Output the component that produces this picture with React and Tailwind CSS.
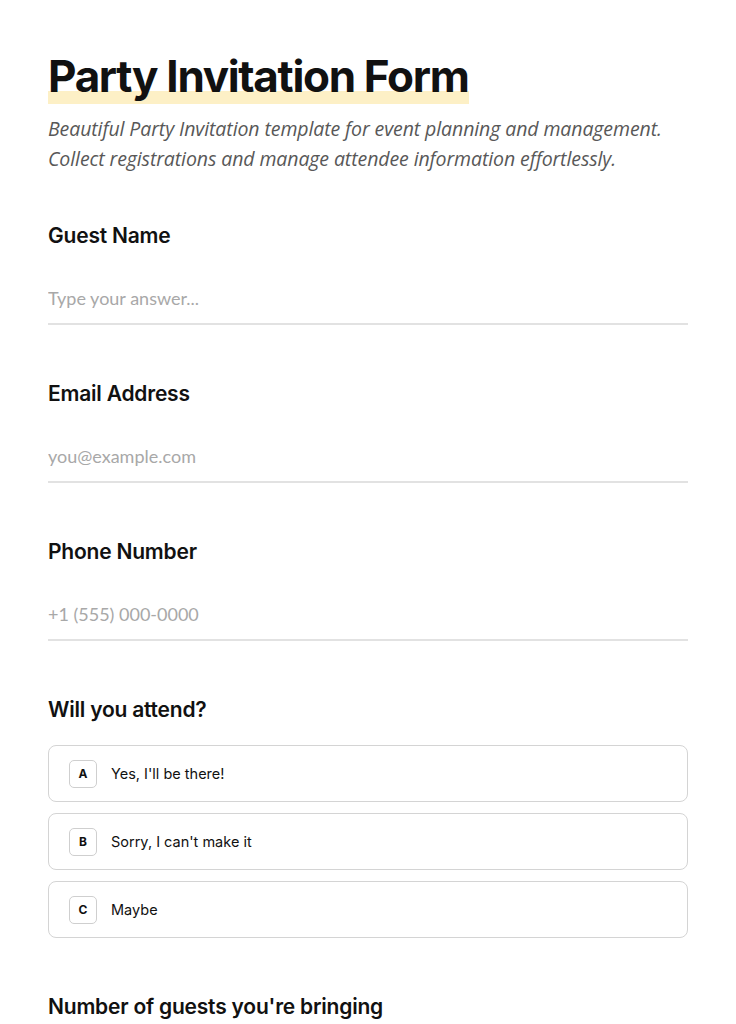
import { useState } from 'react';

const fields = [
  { key: 'name', label: 'Guest Name', placeholder: 'Type your answer...' },
  { key: 'email', label: 'Email Address', placeholder: 'you@example.com' },
  { key: 'phone', label: 'Phone Number', placeholder: '+1 (555) 000-0000' },
];

const options = [
  { letter: 'A', text: "Yes, I'll be there!" },
  { letter: 'B', text: "Sorry, I can't make it" },
  { letter: 'C', text: 'Maybe' },
];

export default function App() {
  const [values, setValues] = useState({});
  const [attend, setAttend] = useState(null);

  return (
    <div className="min-h-screen bg-white font-['Inter',sans-serif] text-[#111]">
      <div className="px-12 pt-[49px] pb-20">
        <h1 className="text-[44px] font-bold leading-[54px] tracking-[-0.03em]">
          <span className="bg-[linear-gradient(transparent_76%,#fdf0c6_76%)] pb-[1px]">Party Invitation Form</span>
        </h1>
        <p className="mt-[11px] font-['Open_Sans',sans-serif] italic text-[19.5px] leading-[30px] tracking-[-0.005em] text-[#585858]">
          Beautiful Party Invitation template for event planning and management.
          <br />
          Collect registrations and manage attendee information effortlessly.
        </p>

        <div className="mt-[48px] flex flex-col gap-[55px]">
          {fields.map((f) => (
            <div key={f.key}>
              <label className="block text-[21px] font-semibold leading-[28px] tracking-[-0.01em]">{f.label}</label>
              <input
                className="mt-[36px] w-full border-b-2 border-[#e2e2e2] pb-[13px] text-[18px] leading-[24px] outline-none placeholder:text-[#a8a8a8] font-['Lato',sans-serif]"
                placeholder={f.placeholder}
                value={values[f.key] || ''}
                onChange={(e) => setValues({ ...values, [f.key]: e.target.value })}
              />
            </div>
          ))}

          <div>
            <label className="block text-[21px] font-semibold leading-[28px] tracking-[-0.01em]">Will you attend?</label>
            <div className="mt-[21px] flex flex-col gap-[11px]">
              {options.map((o) => (
                <button
                  key={o.letter}
                  type="button"
                  onClick={() => setAttend(o.letter)}
                  className={`flex h-[57px] items-center gap-[14px] rounded-[8px] border px-5 text-left ${attend === o.letter ? 'border-[#111]' : 'border-[#d4d4d4]'}`}
                >
                  <span className="flex h-[28px] w-[28px] items-center justify-center rounded-[5px] border border-[#cfcfcf] text-[12px] font-bold">
                    {o.letter}
                  </span>
                  <span className="text-[14.5px]">{o.text}</span>
                </button>
              ))}
            </div>
          </div>

          <div>
            <label className="block text-[21px] font-semibold leading-[28px] tracking-[-0.01em]">Number of guests you're bringing</label>
          </div>
        </div>
      </div>
    </div>
  );
}
